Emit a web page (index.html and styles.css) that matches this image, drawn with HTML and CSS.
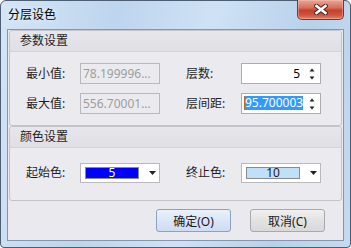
FILE: index.html
```html
<!DOCTYPE html>
<html lang="zh-CN">
<head>
    <meta charset="UTF-8">
    <title>分层设色</title>
    <link rel="stylesheet" href="styles.css">
</head>
<body>
    <div class="window">
        <div class="titlebar">
            <span class="title">分层设色</span>
            <button class="close-btn" aria-label="关闭">
                <svg width="14" height="11" viewBox="0 0 14 11">
                    <path d="M2.5 2 L11.5 9 M11.5 2 L2.5 9" stroke="#4e2520" stroke-width="4.6" stroke-linecap="square"/>
                    <path d="M2.5 2 L11.5 9 M11.5 2 L2.5 9" stroke="#fff" stroke-width="2.6" stroke-linecap="square"/>
                </svg>
            </button>
        </div>

        <div class="client">
            <!-- 参数设置 -->
            <section class="group">
                <div class="group-head">参数设置</div>
                <div class="group-body params">
                    <span class="label">最小值:</span>
                    <div class="field disabled">78.199996...</div>
                    <span class="label">层数:</span>
                    <div class="field edit">
                        <span class="val">5</span>
                        <span class="spin">
                            <svg width="6" height="12" viewBox="0 0 6 12">
                                <polygon points="0.5,3.5 3,0.5 5.5,3.5" fill="#222"/>
                                <polygon points="0.5,8.5 3,11.5 5.5,8.5" fill="#222"/>
                            </svg>
                        </span>
                    </div>

                    <span class="label">最大值:</span>
                    <div class="field disabled">556.70001...</div>
                    <span class="label">层间距:</span>
                    <div class="field edit">
                        <span class="val left"><span class="caret"></span><span class="sel">95.700003</span></span>
                        <span class="spin">
                            <svg width="6" height="12" viewBox="0 0 6 12">
                                <polygon points="0.5,3.5 3,0.5 5.5,3.5" fill="#222"/>
                                <polygon points="0.5,8.5 3,11.5 5.5,8.5" fill="#222"/>
                            </svg>
                        </span>
                    </div>
                </div>
            </section>

            <!-- 颜色设置 -->
            <section class="group">
                <div class="group-head">颜色设置</div>
                <div class="group-body colors">
                    <span class="label">起始色:</span>
                    <div class="combo">
                        <span class="swatch start">5</span>
                        <svg class="arrow" width="7" height="4" viewBox="0 0 7 4"><polygon points="0,0 7,0 3.5,4" fill="#222"/></svg>
                    </div>
                    <span class="label">终止色:</span>
                    <div class="combo">
                        <span class="swatch end">10</span>
                        <svg class="arrow" width="7" height="4" viewBox="0 0 7 4"><polygon points="0,0 7,0 3.5,4" fill="#222"/></svg>
                    </div>
                </div>
            </section>

            <div class="buttons">
                <button class="btn default">确定(O)</button>
                <button class="btn">取消(C)</button>
            </div>
        </div>
    </div>
</body>
</html>
```

FILE: styles.css
```css
* {
    margin: 0;
    padding: 0;
    box-sizing: border-box;
}

body {
    font-family: "Noto Sans", "Noto Sans CJK SC", sans-serif;
    font-size: 12px;
    color: #1e1e1e;
    background: #fff;
}

/* Window frame */
.window {
    width: 351px;
    height: 248px;
    border: 1px solid #4d5d72;
    border-radius: 6px 6px 4px 4px;
    padding: 0 6px 6px;
    background: linear-gradient(100deg, #d4e5f6 0%, #bdd5ee 30%, #cfe2f5 55%, #b8d1eb 80%, #c4daf1 100%);
    display: flex;
    flex-direction: column;
}

.titlebar {
    height: 28px;
    display: flex;
    justify-content: space-between;
    align-items: flex-start;
}

.title {
    padding: 6px 0 0 1px;
    line-height: 16px;
    color: #000;
    text-shadow: 0 0 6px rgba(255, 255, 255, 0.9);
}

.close-btn {
    width: 47px;
    height: 20px;
    margin-top: -1px;
    border: 1px solid #6e3a34;
    border-top: none;
    border-radius: 0 0 5px 5px;
    background: linear-gradient(#eaa797 0%, #d5705c 40%, #c5402f 55%, #cf5540 80%, #de8468 100%);
    display: flex;
    align-items: center;
    justify-content: center;
    box-shadow: inset 0 0 0 1px rgba(255, 200, 190, 0.4);
}

/* Client area */
.client {
    flex: 1;
    border: 1px solid #8596ad;
    background: #eaeaee;
    display: flex;
    flex-direction: column;
}

.group {
    margin: 0 1px;
    border: 1px solid #c3c3c9;
    border-radius: 3px;
    background: #ebebef;
}

.group-head {
    height: 21px;
    line-height: 20px;
    padding-left: 10px;
    background: linear-gradient(#e6e6eb, #dfdfe5);
    border-bottom: 1px solid #d3d3d9;
    border-radius: 2px 2px 0 0;
}

.group-body {
    display: grid;
    grid-template-columns: 54px 106px 55px 80px;
    align-items: center;
    padding-left: 16px;
}

.params {
    padding-top: 11px;
    padding-bottom: 11px;
    grid-auto-rows: 21px;
    row-gap: 9px;
}

.colors {
    padding-top: 15px;
    padding-bottom: 17px;
    grid-auto-rows: 20px;
}

.label {
    line-height: 16px;
    color: #1e1e1e;
}

/* Text fields */
.field {
    width: 80px;
    height: 21px;
    border: 1px solid #b9b9bd;
    line-height: 19px;
    white-space: nowrap;
    overflow: hidden;
}

.field.disabled {
    background: #ebebef;
    color: #9d9d9d;
    padding-left: 2px;
}

.field.edit {
    background: #fff;
    border-color: #abadb3;
    color: #000;
    display: flex;
}

.val {
    flex: 1;
    text-align: right;
    padding-right: 4px;
    overflow: hidden;
}

.val.left {
    text-align: left;
    padding: 2px 0 0 2px;
    display: flex;
    align-items: flex-start;
}

.sel {
    display: inline-block;
    height: 14px;
    line-height: 14px;
    background: #3399ff;
    color: #fff;
}

.caret {
    width: 1px;
    height: 14px;
    background: #b86d2c;
    flex-shrink: 0;
}

.spin {
    width: 16px;
    display: flex;
    align-items: center;
    justify-content: center;
}

/* Colour combos */
.combo {
    width: 80px;
    height: 20px;
    border: 1px solid #b9b9bd;
    background: #fff;
    display: flex;
    align-items: center;
    padding-left: 4px;
}

.swatch {
    width: 54px;
    height: 12px;
    border: 1px solid #8c8c8c;
    line-height: 10px;
    text-align: center;
    font-size: 12px;
}

.swatch.start {
    background: #0000ff;
    color: #fff;
}

.swatch.end {
    background: #bfe0f8;
    color: #1a1a1a;
}

.arrow {
    margin-left: auto;
    margin-right: 3px;
}

/* Dialog buttons */
.buttons {
    display: flex;
    justify-content: flex-end;
    gap: 19px;
    padding: 8px 18px 0 0;
}

.btn {
    width: 75px;
    height: 23px;
    border: 1px solid #a9a9ad;
    border-radius: 3px;
    background: linear-gradient(#f0f0f0, #e2e2e2 50%, #d9d9d9);
    font-family: "Noto Sans", "Noto Sans CJK SC", sans-serif;
    font-size: 12px;
    color: #1a1a1a;
}

.btn.default {
    border-color: #8ea2bf;
    background: linear-gradient(#eaf1fb, #dbe6f6 50%, #cfdcf1);
}
```
